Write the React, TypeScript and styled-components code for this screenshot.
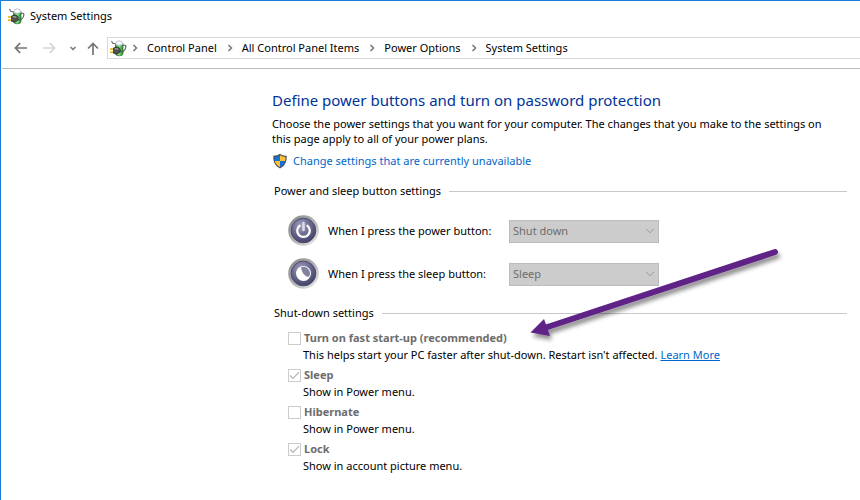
import React, { useId } from "react";
import styled, { createGlobalStyle } from "styled-components";

const GlobalStyle = createGlobalStyle`
  *, *::before, *::after { box-sizing: border-box; }
  body {
    margin: 0;
    background: #fff;
    color: #000;
    font: 11px/16px "Noto Sans", "Open Sans", sans-serif;
  }
  h1, h2, p, ul, ol { margin: 0; padding: 0; font-weight: 400; }
  ul, ol { list-style: none; }
  button, select, input { font: inherit; margin: 0; }
  svg { display: block; flex: none; }
`;

const Window = styled.div`
  position: relative;
  min-height: 100vh;
  border-top: 1px solid #1a7fd4;
  border-left: 1px solid #1a7fd4;
  overflow: hidden;
`;

const TitleBar = styled.header`
  display: flex;
  align-items: center;
  gap: 5px;
  height: 30px;
  padding-left: 7px;
`;

const NavBar = styled.nav`
  display: flex;
  align-items: center;
  margin-left: 1px;
  padding: 6px 0 9px 9px;
  border-bottom: 1px solid #b9b9b9;
`;

const NavButtons = styled.div`
  display: flex;
  gap: 3px;
`;

const NavButton = styled.button<{ $width: number }>`
  display: flex;
  align-items: center;
  justify-content: center;
  width: ${(p) => p.$width}px;
  height: 20px;
  padding: 0;
  border: 0;
  background: none;
`;

const AddressBar = styled.ol`
  display: flex;
  flex: 1;
  align-items: center;
  height: 22px;
  padding-left: 2px;
  border: 1px solid #d9d9d9;
  border-right: 0;
`;

const Crumb = styled.li`
  display: flex;
  align-items: center;
  white-space: nowrap;
`;

const CrumbLink = styled.a`
  color: #000;
  text-decoration: none;
  line-height: 18px;
`;

const CrumbArrow = styled.svg`
  margin: 0 9px 0 10px;
  ${Crumb}:nth-child(2) & { margin: 0 9px 0 5px; }
`;

const Main = styled.main`
  padding: 20px 13px 20px 271px;
`;

const Title = styled.h1`
  color: #003399;
  font-size: 15px;
  line-height: 22px;
`;

const Intro = styled.p`
  margin-top: 5px;
  padding-right: 10px;
  line-height: 15px;
`;

const AdminRow = styled.div`
  display: flex;
  align-items: center;
  gap: 5px;
  margin-top: 7px;
`;

const AdminLink = styled.a`
  color: #0066cc;
  text-decoration: none;
`;

const Section = styled.section`
  margin: 14px 0 0 2px;
`;

const SectionTitle = styled.h2`
  display: flex;
  align-items: center;
  gap: 8px;
  font-size: 11px;
  &::after {
    content: "";
    flex: 1;
    height: 1px;
    background: #c8c8c8;
  }
`;

const ButtonSettings = styled.div`
  display: grid;
  gap: 11px;
  padding: 16px 0 1px 14px;
`;

const ButtonSetting = styled.div`
  display: grid;
  grid-template-columns: 40px 181px 150px;
  align-items: center;
`;

const SelectBox = styled.div`
  display: grid;
  align-items: center;
  & > * { grid-area: 1 / 1; }
  & > svg { justify-self: end; margin-right: 4px; pointer-events: none; }
`;

const Select = styled.select`
  appearance: none;
  height: 23px;
  padding: 0 20px 0 3px;
  border: 1px solid #bcbcbc;
  border-radius: 0;
  background: #cccccc;
  color: #6d6d6d;
  opacity: 1;
`;

const Options = styled.ul`
  display: grid;
  gap: 3px;
  padding: 8px 0 0 14px;
`;

const OptionLabel = styled.label`
  display: flex;
  align-items: center;
  gap: 3px;
  height: 18px;
  color: #6d6d6d;
  font-weight: 700;
`;

const Tick = styled.span`
  display: grid;
  & > * { grid-area: 1 / 1; }
  & > svg { pointer-events: none; }
`;

const TickInput = styled.input`
  appearance: none;
  width: 13px;
  height: 13px;
  border: 1px solid #cccccc;
  background: #fff;
`;

const Description = styled.p`
  padding-left: 15px;
`;

const TextLink = styled.a`
  color: #0066cc;
  text-decoration: underline;
`;

const Annotation = styled.svg`
  position: absolute;
  left: 519px;
  top: 239px;
  pointer-events: none;
`;

function PowerPlanIcon() {
  const id = useId();
  return (
    <svg width="17" height="17" viewBox="0 0 17 17" aria-hidden="true">
      <defs>
        <linearGradient id={id} x1="0" x2="1">
          <stop offset="0" stopColor="#2c8a30" />
          <stop offset="0.45" stopColor="#8af086" />
          <stop offset="1" stopColor="#1d8a28" />
        </linearGradient>
      </defs>
      <path d="M5.500 3.500v10q0 2.300 3.800 2.300T13 13.500v-10z" fill={`url(#${id})`} stroke="#2f6a34" strokeWidth="0.7" />
      <path d="M5.500 4.500Q5.500 .8 9.200.8T13 4.500q-3.700 1.800-7.500 0z" fill="#fafbff" stroke="#a4aabb" strokeWidth="0.7" />
      <path d="M12.500 5.200h2q1.700 0 1.300 2.300T13 11.500l-3 .5" fill="none" stroke="#555" strokeWidth="1.100" />
      <path d="M1.500 1l1.300 2.300L5.500 4" fill="none" stroke="#666" strokeWidth="1.100" />
      <path d="M0 9h4M0 12.300h4" stroke="#e6b000" strokeWidth="1.500" />
      <path d="M3.500 8L6 7q4.300 0 4.300 3.300T6 14l-2.500-.7z" fill="#505050" stroke="#2a2a2a" strokeWidth="0.7" />
      <path d="M4.800 9q2-.8 3.500.4" fill="none" stroke="#b5b5b5" strokeWidth="1.100" />
    </svg>
  );
}

function Shield() {
  return (
    <svg width="16" height="16" viewBox="0 0 16 16" aria-hidden="true">
      <path d="M8 .7Q5.500 2.700 1.300 2.800C1 8.500 2.700 13 8 15.400 13.300 13 15 8.500 14.700 2.800 10.500 2.700 8 .7 8 .7z" fill="#4a5058" />
      <path d="M8 2.200Q5.500 3.900 2.500 4 2.400 6 2.800 8H8z" fill="#1673d1" />
      <path d="M8 2.200Q10.500 3.900 13.500 4q.1 2-.3 4H8z" fill="#ffc03a" />
      <path d="M2.800 8H8v6.100Q3.800 12.200 2.800 8z" fill="#ffc03a" />
      <path d="M13.200 8H8v6.100q4.200-1.900 5.200-6.100z" fill="#1673d1" />
    </svg>
  );
}

function RoundIcon({ kind }: { kind: "power" | "sleep" }) {
  const id = useId();
  return (
    <svg width="32" height="32" viewBox="0 0 32 32" aria-hidden="true">
      <defs>
        <linearGradient id={`${id}r`} x1="0" y1="0" x2="1" y2="1">
          <stop offset="0" stopColor="#828286" />
          <stop offset="0.5" stopColor="#b2b2b6" />
          <stop offset="1" stopColor="#f0f0f2" />
        </linearGradient>
        <radialGradient id={`${id}b`} cx="0.4" cy="0.3" r="0.75">
          <stop offset="0" stopColor="#a0a1bf" />
          <stop offset="0.5" stopColor="#6a6a92" />
          <stop offset="1" stopColor="#3d3d64" />
        </radialGradient>
      </defs>
      <circle cx="15.500" cy="15.500" r="15.300" fill={`url(#${id}r)`} />
      <circle cx="15.500" cy="15.500" r="12.300" fill={`url(#${id}b)`} stroke="#4b4b68" />
      {kind === "power" ? (
        <g fill="none" stroke="#fff" strokeLinecap="round">
          <path d="M11.500 10.800a6.300 6.300 0 1 0 8 0" strokeWidth="2.300" />
          <path d="M15.500 8v7" stroke="#dcdce6" strokeWidth="2.600" />
        </g>
      ) : (
        <>
          <circle cx="15.500" cy="15.500" r="7.500" fill="#fff" />
          <path d="M13 9.200a6.600 6.600 0 0 1 8.300 9q-1.200 1-3 0Q13.800 15.500 13 9.200z" fill="#82829f" />
        </>
      )}
    </svg>
  );
}

function ButtonRow({ kind, label, value }: { kind: "power" | "sleep"; label: string; value: string }) {
  const id = useId();
  return (
    <ButtonSetting>
      <RoundIcon kind={kind} />
      <label htmlFor={id}>{label}</label>
      <SelectBox>
        <Select id={id} disabled defaultValue={value}>
          <option>{value}</option>
        </Select>
        <svg width="10" height="6" viewBox="0 0 10 6" aria-hidden="true">
          <path d="M1 .8l4 4 4-4" fill="none" stroke="#9a9a9a" />
        </svg>
      </SelectBox>
    </ButtonSetting>
  );
}

interface OptionProps {
  name: string;
  checked?: boolean;
  children: React.ReactNode;
}

function Option({ name, checked = false, children }: OptionProps) {
  return (
    <li>
      <OptionLabel>
        <Tick>
          <TickInput type="checkbox" checked={checked} disabled readOnly />
          {checked && (
            <svg width="13" height="13" viewBox="0 0 13 13" aria-hidden="true">
              <path d="M2 6.500l3 3L11 3.200" fill="none" stroke="#b4b4b4" strokeWidth="1.200" />
            </svg>
          )}
        </Tick>
        {name}
      </OptionLabel>
      <Description>{children}</Description>
    </li>
  );
}

const crumbs = ["Control Panel", "All Control Panel Items", "Power Options", "System Settings"];

export default function App() {
  return (
    <Window>
      <GlobalStyle />
      <TitleBar>
        <PowerPlanIcon />
        System Settings
      </TitleBar>
      <NavBar aria-label="Navigation">
        <NavButtons>
          <NavButton $width={18} aria-label="Back">
            <svg width="13" height="12" viewBox="0 0 13 12">
              <path d="M13 6H1.500M6.200 1.200L1.400 6l4.800 4.800" fill="none" stroke="#757575" strokeWidth="1.700" />
            </svg>
          </NavButton>
          <NavButton $width={35} aria-label="Forward" disabled>
            <svg width="13" height="12" viewBox="0 0 13 12">
              <path d="M0 6h11.500M6.800 1.200L11.600 6l-4.800 4.800" fill="none" stroke="#d6d6d6" strokeWidth="1.700" />
            </svg>
          </NavButton>
          <NavButton $width={6} aria-label="Recent locations">
            <svg width="6" height="5" viewBox="0 0 6 5">
              <path d="M.5 1L3 3.500 5.500 1" fill="none" stroke="#757575" strokeWidth="1.500" />
            </svg>
          </NavButton>
          <NavButton $width={28} aria-label="Up">
            <svg width="12" height="13" viewBox="0 0 12 13">
              <path d="M6 13V1.500M1 6.500l5-5 5 5" fill="none" stroke="#757575" strokeWidth="1.700" />
            </svg>
          </NavButton>
        </NavButtons>
        <AddressBar>
          <Crumb>
            <PowerPlanIcon />
          </Crumb>
          {crumbs.map((crumb) => (
            <Crumb key={crumb}>
              <CrumbArrow width="6" height="8" viewBox="0 0 6 8" aria-hidden="true">
                <path d="M1.500 1l3 3-3 3" fill="none" stroke="#777" strokeWidth="1.500" />
              </CrumbArrow>
              <CrumbLink href="#">{crumb}</CrumbLink>
            </Crumb>
          ))}
        </AddressBar>
      </NavBar>
      <Main>
        <Title>Define power buttons and turn on password protection</Title>
        <Intro>
          Choose the power settings that you want for your computer. The changes that you make to the settings on this
          page apply to all of your power plans.
        </Intro>
        <AdminRow>
          <Shield />
          <AdminLink href="#">Change settings that are currently unavailable</AdminLink>
        </AdminRow>
        <Section>
          <SectionTitle>Power and sleep button settings</SectionTitle>
          <ButtonSettings>
            <ButtonRow kind="power" label="When I press the power button:" value="Shut down" />
            <ButtonRow kind="sleep" label="When I press the sleep button:" value="Sleep" />
          </ButtonSettings>
        </Section>
        <Section>
          <SectionTitle>Shut-down settings</SectionTitle>
          <Options>
            <Option name="Turn on fast start-up (recommended)">
              This helps start your PC faster after shut-down. Restart isn't affected.{" "}
              <TextLink href="#">Learn More</TextLink>
            </Option>
            <Option name="Sleep" checked>
              Show in Power menu.
            </Option>
            <Option name="Hibernate">Show in Power menu.</Option>
            <Option name="Lock" checked>
              Show in account picture menu.
            </Option>
          </Options>
        </Section>
      </Main>
      <Annotation width="270" height="110" viewBox="0 0 270 110" aria-hidden="true">
        <defs>
          <filter id="arrow-shadow" x="-10%" y="-10%" width="120%" height="130%">
            <feDropShadow dx="2" dy="4" stdDeviation="2" floodColor="#000" floodOpacity="0.45" />
          </filter>
        </defs>
        <g filter="url(#arrow-shadow)">
          <path d="M255 12L26 87.500" stroke="#5f2187" strokeWidth="6" strokeLinecap="round" />
          <path d="M10.500 92.500L24 79l6 17z" fill="#5f2187" />
        </g>
      </Annotation>
    </Window>
  );
}
